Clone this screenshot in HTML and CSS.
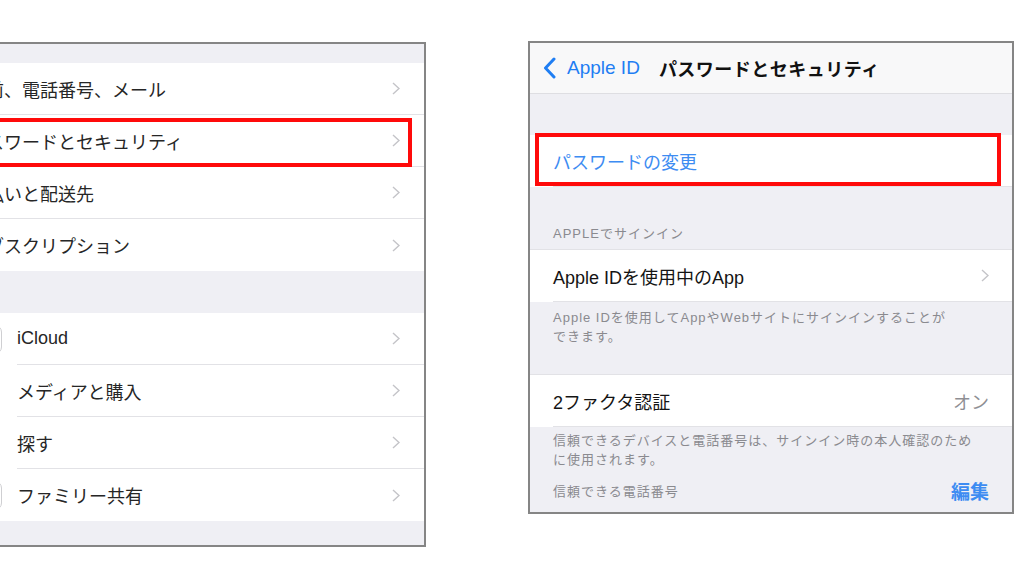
FILE: index.html
```html
<!DOCTYPE html>
<html lang="ja">
<head>
<meta charset="utf-8">
<title>Apple ID</title>
<link rel="stylesheet" href="styles.css">
</head>
<body>
<div class="stage">
  <section class="panel left">
    <div class="band band-top"></div>
    <ul class="group plain">
      <li class="row"><div class="cell"><span class="label">名前、電話番号、メール</span><svg class="chev" width="8" height="13" viewBox="0 0 8 13"><path d="M1 1l6 5.5L1 12" fill="none" stroke="#c4c4c8" stroke-width="1.4"/></svg></div></li>
      <li class="row marked"><div class="cell"><span class="label">パスワードとセキュリティ</span><svg class="chev" width="8" height="13" viewBox="0 0 8 13"><path d="M1 1l6 5.5L1 12" fill="none" stroke="#c4c4c8" stroke-width="1.4"/></svg></div><span class="mark mark-left"></span></li>
      <li class="row"><div class="cell"><span class="label">支払いと配送先</span><svg class="chev" width="8" height="13" viewBox="0 0 8 13"><path d="M1 1l6 5.5L1 12" fill="none" stroke="#c4c4c8" stroke-width="1.4"/></svg></div></li>
      <li class="row"><div class="cell"><span class="label">サブスクリプション</span><svg class="chev" width="8" height="13" viewBox="0 0 8 13"><path d="M1 1l6 5.5L1 12" fill="none" stroke="#c4c4c8" stroke-width="1.4"/></svg></div></li>
    </ul>
    <div class="band band-mid"></div>
    <ul class="group iconed">
      <li class="row"><span class="icon icon-edge"></span><div class="cell"><span class="label">iCloud</span><svg class="chev" width="8" height="13" viewBox="0 0 8 13"><path d="M1 1l6 5.5L1 12" fill="none" stroke="#c4c4c8" stroke-width="1.4"/></svg></div></li>
      <li class="row"><span class="icon"></span><div class="cell"><span class="label">メディアと購入</span><svg class="chev" width="8" height="13" viewBox="0 0 8 13"><path d="M1 1l6 5.5L1 12" fill="none" stroke="#c4c4c8" stroke-width="1.4"/></svg></div></li>
      <li class="row"><span class="icon"></span><div class="cell"><span class="label">探す</span><svg class="chev" width="8" height="13" viewBox="0 0 8 13"><path d="M1 1l6 5.5L1 12" fill="none" stroke="#c4c4c8" stroke-width="1.4"/></svg></div></li>
      <li class="row"><span class="icon icon-edge"></span><div class="cell"><span class="label">ファミリー共有</span><svg class="chev" width="8" height="13" viewBox="0 0 8 13"><path d="M1 1l6 5.5L1 12" fill="none" stroke="#c4c4c8" stroke-width="1.4"/></svg></div></li>
    </ul>
    <div class="band band-bot"></div>
  </section>

  <section class="panel right">
    <header class="nav">
      <svg class="back" width="13" height="22" viewBox="0 0 13 22"><path d="M11 2L2.5 11 11 20" fill="none" stroke="#1f7ef3" stroke-width="3" stroke-linecap="round" stroke-linejoin="round"/></svg>
      <span class="back-label">Apple ID</span>
      <span class="title">パスワードとセキュリティ</span>
    </header>
    <div class="band band-nav"></div>
    <div class="row r-row marked"><div class="cell"><span class="label link">パスワードの変更</span></div><span class="mark mark-right"></span></div>
    <div class="section-head">APPLEでサインイン</div>
    <div class="row r-row"><div class="cell"><span class="label">Apple IDを使用中のApp</span><svg class="chev" width="8" height="13" viewBox="0 0 8 13"><path d="M1 1l6 5.5L1 12" fill="none" stroke="#c4c4c8" stroke-width="1.4"/></svg></div></div>
    <p class="foot foot-a">Apple IDを使用してAppやWebサイトにサインインすることが<br>できます。</p>
    <div class="row r-row"><div class="cell"><span class="label">2ファクタ認証</span><span class="value">オン</span></div></div>
    <p class="foot foot-b">信頼できるデバイスと電話番号は、サインイン時の本人確認のため<br>に使用されます。</p>
    <div class="foot-line"><span class="foot-label">信頼できる電話番号</span><span class="edit">編集</span></div>
  </section>
</div>
</body>
</html>
```

FILE: styles.css
```css
* { box-sizing: border-box; }
html, body { margin: 0; padding: 0; background: #fff; overflow: hidden; }
body {
  width: 1024px;
  height: 585px;
  font-family: "Liberation Sans", "Noto Sans CJK JP", sans-serif;
}
.stage {
  display: flex;
  align-items: flex-start;
}
.panel {
  position: relative;
  background: #efeff4;
  border: 2px solid #858585;
  overflow: hidden;
}
.left {
  margin-left: -60px;
  margin-top: 42px;
  width: 486px;
  height: 505px;
}
.right {
  margin-left: 102px;
  margin-top: 41px;
  width: 486px;
}
.group { list-style: none; margin: 0; padding: 0; background: #fff; }
.band-top { height: 19px; }
.band-mid { height: 42px; }
.band-bot { height: 24px; }
.row {
  position: relative;
  display: flex;
  align-items: center;
  background: #fff;
}
.plain .row { padding-left: 26px; }
.iconed .row { padding-left: 31px; }
.cell {
  flex: 1;
  height: 52px;
  display: flex;
  align-items: center;
  justify-content: space-between;
  padding-right: 24px;
  border-bottom: 1px solid #e2e2e6;
}
.group .row:last-child .cell { border-bottom: none; }
.label {
  font-size: 18px;
  color: #262626;
  white-space: nowrap;
}
.chev { flex: none; }
.icon {
  flex: none;
  width: 29px;
  height: 29px;
  border-radius: 7px;
  margin-right: 15px;
}
.icon-edge { border: 1px solid #cfcfd2; background: #fff; }
.mark {
  position: absolute;
  border: 4px solid #ff0a0a;
  pointer-events: none;
}
.mark-left { left: 0; top: 3px; bottom: 0; right: 12px; }

/* right panel */
.nav {
  height: 51px;
  display: flex;
  align-items: center;
  background: #f8f8f9;
  border-bottom: 1px solid #dedee2;
  padding-left: 13px;
}
.back { flex: none; }
.back-label {
  margin-left: 11px;
  font-size: 19px;
  color: #1f7ef3;
}
.title {
  margin-left: 19px;
  font-size: 18px;
  font-weight: bold;
  color: #111;
  letter-spacing: 0.5px;
}
.band-nav { height: 41px; }
.r-row { padding-left: 23px; }
.r-row .cell { padding-right: 23px; }
.right .label { color: #141414; }
.right .label.link { color: #3d8cf2; }
.mark-right { left: 5px; right: 11px; top: -2px; bottom: 1px; }
.section-head {
  padding: 38px 0 7px 23px;
  height: 63px;
  line-height: 18px;
  font-size: 13px;
  letter-spacing: 1px;
  color: #8a8a8f;
  border-bottom: 1px solid #e2e2e6;
}
.foot {
  margin: 0;
  padding-left: 23px;
  font-size: 13px;
  line-height: 19px;
  letter-spacing: 1px;
  color: #8a8a8f;
}
.foot-a { padding-top: 6px; padding-bottom: 28px; }
.foot-b { padding-top: 4px; padding-bottom: 0; }
.value { font-size: 18px; color: #8e8e93; }
.foot-a + .r-row { border-top: 1px solid #e2e2e6; }
.foot-line {
  display: flex;
  align-items: center;
  justify-content: space-between;
  padding: 9px 23px 10px 23px;
  height: 43px;
}
.foot-label {
  font-size: 13px;
  letter-spacing: 1px;
  color: #8a8a8f;
}
.edit {
  font-size: 19px;
  font-weight: bold;
  color: #3d8cf2;
}
```
